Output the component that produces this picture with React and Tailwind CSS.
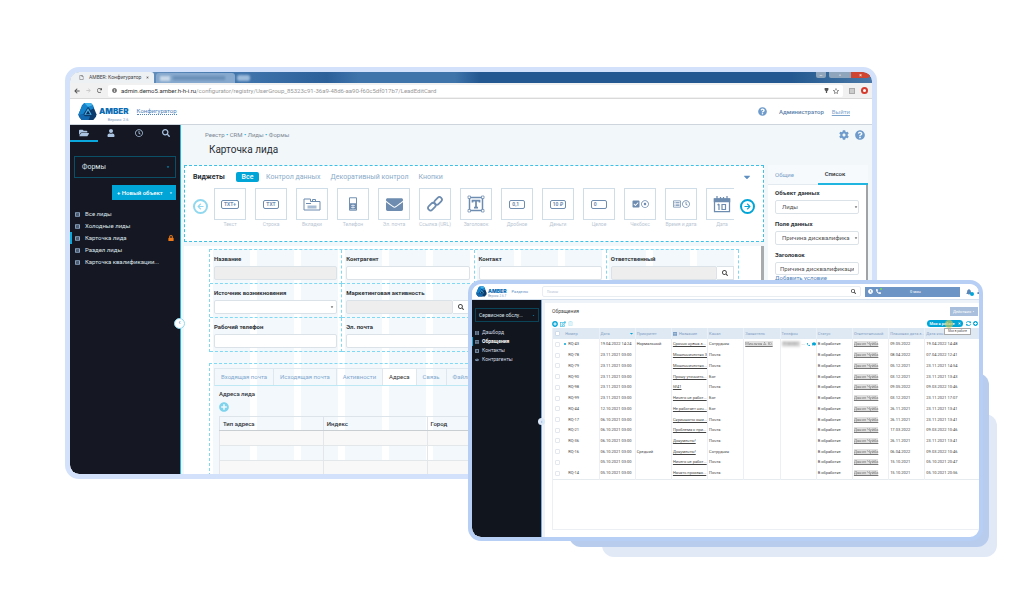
import React from "react";
import {
  FaFolderOpen, FaUser, FaRegClock, FaSearch, FaQuestionCircle, FaCog, FaLock, FaCaretDown,
  FaEnvelope, FaPlusCircle, FaRegEdit, FaRegTrashAlt, FaSyncAlt, FaBell, FaPhoneAlt,
  FaRegFile, FaRegStar, FaArrowLeft, FaRedo, FaTh, FaClock, FaCheckSquare, FaRegDotCircle,
  FaListAlt, FaRegListAlt, FaTable, FaHandshake, FaComment, FaInfoCircle, FaTimes,
} from "react-icons/fa";

function Logo({ className }) {
  return (
    <svg viewBox="0 0 36 36" className={className} aria-hidden="true">
      <path d="M12 2h12l4 4 7 17-1 5-5 6H7l-5-6-1-5L8 6z" fill="#0b3a6b" />
      <path d="M12 2h12l4 4 2 6-6 3-5-6-9 14-9 2 0-2L8 6z" fill="#1583cc" />
      <path d="M12 2h12l4 4-9 3z" fill="#3fb2ea" />
      <path d="M1 25l9-2 3 4h10l-3 7H7l-5-6z" fill="#1269b0" />
      <path d="M19 12l7 12H12z" fill="#4fb4e8" />
      <path d="M19 16l4 7h-8z" fill="#0a2f5c" />
    </svg>
  );
}

function BoxText({ children }) {
  return (
    <span className="rounded-[2px] border border-[#6d8cb0] px-[2px] py-px text-[5px] leading-[5px] font-bold text-[#6d8cb0]">
      {children}
    </span>
  );
}

function Stroke({ children, className }) {
  return (
    <svg viewBox="0 0 36 36" className={className} fill="none" stroke="#6d8cb0" strokeWidth="3" aria-hidden="true">
      {children}
    </svg>
  );
}

const widgets = [
  ["Текст", <BoxText>TXT+</BoxText>],
  ["Строка", <BoxText>TXT</BoxText>],
  ["Вкладки", <Stroke className="size-[18px]"><path d="M2 30V8h13v5h19v17zM19 13V9h6v4M6 17h10" strokeWidth="2" /><path d="M9 21h18v6H9z" fill="#a9bdd4" stroke="none" /></Stroke>],
  ["Телефон", <Stroke className="size-[14px]"><path d="M9 2h18v32H9z" strokeWidth="2.5" /><path d="M10 16h16v16H10z" fill="#6d8cb0" stroke="none" /><path d="M13 22h10M13 27h10M18 19v11" stroke="#fff" strokeWidth="1.6" /></Stroke>],
  ["Эл. почта", <FaEnvelope className="size-[17px]" />],
  ["Ссылка (URL)", <Stroke className="size-[18px]"><rect x="3" y="18" width="17" height="10" rx="5" transform="rotate(-45 12 23)" strokeWidth="3.5" /><rect x="16" y="7" width="17" height="10" rx="5" transform="rotate(-45 24 12)" strokeWidth="3.5" /></Stroke>],
  ["Заголовок", <Stroke className="size-[18px]"><path d="M5 5h26v26H5z" /><path d="M11 15v-4h14v4M18 11v14M14 25h8" strokeWidth="3.5" /><path d="M2 2h5v5H2zM29 2h5v5h-5zM2 29h5v5H2zM29 29h5v5h-5z" fill="#fff" strokeWidth="1.5" /></Stroke>],
  ["Дробное", <BoxText>0,1&nbsp;&nbsp;</BoxText>],
  ["Деньги", <BoxText>10 ₽</BoxText>],
  ["Целое", <BoxText>0&nbsp;&nbsp;&nbsp;&nbsp;&nbsp;&nbsp;</BoxText>],
  ["Чекбокс", <><FaCheckSquare className="size-[8px]" /><FaRegDotCircle className="size-[8px]" /></>],
  ["Время и дата", <><FaRegListAlt className="size-[8px]" /><FaRegClock className="size-[8px]" /></>],
  ["Дата", <Stroke className="size-[18px]"><path d="M3 8h30v25H3z" strokeWidth="2.5" /><path d="M3 8h30v5H3z" fill="#6d8cb0" /><path d="M8 2v9M15 4v6M21 4v6M28 2v9" strokeWidth="2.5" /><path d="M12 18v12M9 20l3-2M18 19h7v10h-7z" strokeWidth="2.4" /></Stroke>],
];

const sideItems = ["Все лиды", "Холодные лиды", "Карточка лида", "Раздел лиды", "Карточка квалификации..."];

function Field({ id, label, kind }) {
  return (
    <div className="flex flex-col gap-[3px] border-r border-b border-dashed border-[#7fd8f4] px-[4px] pt-[5px] pb-[3px]">
      <label htmlFor={id} className="h-[8px] text-[6px] leading-[8px] font-bold text-[#2e3338]">{label}</label>
      {kind === "select" ? (
        <div className="relative flex">
          <select id={id} className="h-[14px] w-full appearance-none rounded-[2px] border border-[#dce3e8] bg-white" />
          <FaCaretDown className="pointer-events-none absolute top-[5px] right-[3px] size-[4px] text-[#333]" />
        </div>
      ) : (
        <div className="flex">
          <input id={id} className={"h-[14px] w-full min-w-0 rounded-[2px] border border-[#dce3e8] " + (kind ? "bg-[#eeeeee]" : "bg-white")} />
          {kind === "lookup" && (
            <button aria-label="Найти" className="grid h-[14px] w-[17px] shrink-0 place-items-center border border-l-0 border-[#dce3e8] bg-white">
              <FaSearch className="size-[6px] text-[#444]" />
            </button>
          )}
        </div>
      )}
    </div>
  );
}

function PanelSelect({ id, label, value }) {
  return (
    <div className="flex flex-col gap-[3px]">
      <label htmlFor={id} className="text-[6px] leading-[8px] font-bold text-[#2e3338]">{label}</label>
      <div className="relative flex">
        <select id={id} className="h-[14px] w-full appearance-none rounded-[2px] border border-[#dce3e8] bg-white px-[6px] text-[6px] leading-[12px] text-[#555]">
          <option>{value}</option>
        </select>
        <FaCaretDown className="pointer-events-none absolute top-[5px] right-px size-[4px] text-[#333]" />
      </div>
    </div>
  );
}

function BrowserChrome() {
  return (
    <>
      <div className="flex h-[11px] items-end justify-between bg-[linear-gradient(90deg,#7fa3c9_0%,#4377ae_20%,#2b6099_32%,#3f74ab_36%,#3f74ab_48%,#235990_51%,#235990_90%,#4a79a8_100%)]">
        <div className="flex h-full items-end gap-[2px]">
          <div className="flex h-[11px] w-[84px] items-center gap-[5px] rounded-t-[3px] bg-[#eef1f4] pl-[9px]">
            <FaRegFile className="size-[5px] text-[#666]" />
            <span className="text-[5px] leading-[7px] text-[#444]">AMBER: Конфигуратор</span>
            <FaTimes className="size-[3px] text-[#666]" />
          </div>
          <div className="flex h-[10px] w-[79px] items-center gap-[3px] rounded-t-[3px] bg-[#86a9cd] px-[4px]">
            <span className="h-[5px] w-[10px] bg-[#c9d9ea] blur-[1px]" />
            <span className="h-[4px] w-[52px] bg-[#6a90b8] blur-[1px]" />
          </div>
          <div className="mb-[2px] h-[6px] w-[13px] rounded-[2px] bg-[#9dbbdb] blur-[1px]" />
        </div>
        <div className="mr-[2px] flex h-full items-start text-[5px] leading-[6px] text-white">
          <button aria-label="Свернуть" className="mr-[3px] h-[6px] w-[10px] rounded-b-[2px] bg-[#8fa5bb]">–</button>
          <button aria-label="Окно" className="h-[6px] w-[22px] rounded-bl-[2px] bg-[#8fa5bb]">▫</button>
          <button aria-label="Закрыть" className="h-[6px] w-[19px] rounded-br-[3px] bg-[#cf4532]">×</button>
        </div>
      </div>
      <div className="flex h-[16px] items-center gap-[6px] border-b border-[#d9d9d9] bg-[#f1f1f1] pr-[4px] pl-[4px]">
        <FaArrowLeft className="size-[6px] text-[#555]" />
        <FaArrowLeft className="size-[5px] rotate-180 text-[#ccc]" />
        <FaRedo className="size-[5px] text-[#555]" />
        <div className="flex h-[12px] flex-1 items-center rounded-[2px] bg-white px-[4px]">
          <FaInfoCircle className="mr-[4px] size-[5px] text-[#777]" />
          <span className="flex-1 text-[6px] leading-[8px] text-[#999]">
            <span className="text-[#333]">admin.demo5.amber.h-h-i.ru</span>/configurator/registry/UserGroup_85323c91-36a9-48d6-aa90-f60c5df017b7/LeadEditCard
          </span>
          <svg viewBox="0 0 8 8" className="mr-[4px] size-[5px]" fill="#555" aria-hidden="true"><path d="M1 0h6v3L5 5v3H3V5L1 3z" /></svg>
          <FaRegStar className="size-[6px] text-[#555]" />
        </div>
        <span className="size-[6px] border border-[#aaa] bg-[#ccc]" />
        <span className="size-[7px] rounded-full border-2 border-[#d63a2c] bg-white" />
      </div>
    </>
  );
}

function Configurator() {
  return (
    <section className="mt-[67px] mr-[147px] ml-[65px] self-start overflow-hidden rounded-[14px] border-[5px] border-[#d3e2fa] bg-white [grid-area:1/1]">
      <div className="flex h-[402px] flex-col overflow-hidden rounded-[9px]">
        <BrowserChrome />
        <header className="flex h-[26px] shrink-0 items-center border-b border-[#cfd5dc] bg-white pr-[22px] pl-[8px]">
          <Logo className="size-[19px]" />
          <div className="ml-[2px] flex flex-col pt-[7px]">
            <span className="font-[Inter,sans-serif] text-[8px] leading-[9px] font-black text-[#0b6db3]">AMBER</span>
            <span className="self-end text-[4px] leading-[8px] text-[#7d9cc0]">Версия: 2.6</span>
          </div>
          <a href="#" className="mb-[2px] ml-[8px] border-b border-dotted border-[#4b82bd] text-[6px] leading-[7px] text-[#4b82bd]">Конфигуратор</a>
          <FaQuestionCircle className="ml-auto size-[9px] text-[#6e9bcb]" />
          <span className="ml-[12px] text-[6px] leading-[8px] font-medium text-[#5c7fa9]">Администратор</span>
          <a href="#" className="ml-[8px] text-[6px] leading-[8px] text-[#7ea4cc] underline">Выйти</a>
        </header>
        <div className="flex min-h-0 flex-1">
          <aside className="relative w-[111px] shrink-0 border-r border-[#20b4e0] bg-[#151822]">
            <nav className="grid h-[17px] grid-cols-4 text-[#aac4e2]">
              {[FaFolderOpen, FaUser, FaRegClock, FaSearch].map((Icon, i) => (
                <button key={i} aria-label={["Папки", "Пользователи", "История", "Поиск"][i]} className={"grid place-items-center border-b-2 " + (i === 0 ? "border-[#0aa7dc]" : "border-transparent")}>
                  <Icon className={i === 0 ? "size-[10px]" : "size-[8px]"} />
                </button>
              ))}
            </nav>
            <div className="flex flex-col px-[4px] pt-[14px]">
              <button className="flex h-[22px] items-center justify-between border border-[#0b4f66] pr-[5px] pl-[7px] text-[7px] leading-[9px] text-[#dfe5ec]">
                Формы<FaCaretDown className="size-[4px] text-[#0aa7dc]" />
              </button>
              <button className="mt-[7px] flex h-[15px] w-[64px] items-center justify-between self-end bg-[#00a5d8] pr-[3px] pl-[5px] text-[6px] leading-[8px] font-medium text-white">
                + Новый объект<FaCaretDown className="size-[4px]" />
              </button>
            </div>
            <ul className="mt-[8px]">
              {sideItems.map((t, i) => (
                <li key={t} className={"flex h-[12px] items-center border-l-2 pr-[6px] pl-[3px] text-[6px] leading-[8px] text-[#dfe5ec] " + (i === 2 ? "border-[#0aa7dc]" : "border-transparent")}>
                  <FaListAlt className="mr-[5px] size-[5px] text-[#8aa6c4]" />
                  <a href="#">{t}</a>
                  {i === 2 && <FaLock className="ml-auto size-[6px] text-[#f07a1a]" />}
                </li>
              ))}
            </ul>
            <button aria-label="Свернуть меню" className="absolute top-[193px] right-[-5px] grid size-[11px] place-items-center rounded-full border border-[#8fd8ef] bg-white text-[7px] leading-[7px] text-[#3b7fc0]">‹</button>
          </aside>
          <main className="flex min-w-0 flex-1 flex-col bg-[#f2f7fa]">
            <div className="flex h-[40px] shrink-0 justify-between pr-[7px] pl-[24px]">
              <div>
                <p className="pt-[6px] text-[6px] leading-[8px] text-[#7c8894]">Реестр <b className="text-[#2cb5e0]">•</b> CRM <b className="text-[#2cb5e0]">•</b> Лиды <b className="text-[#2cb5e0]">•</b> Формы</p>
                <h1 className="pt-[5px] pl-[4px] text-[10px] leading-[12px] text-[#2a2f35]">Карточка лида</h1>
              </div>
              <div className="flex gap-[6px] pt-[5px] text-[#6e9bcb]">
                <FaCog className="size-[10px]" />
                <FaQuestionCircle className="size-[10px]" />
              </div>
            </div>
            <div className="flex min-h-0 flex-1 gap-[4px] pr-[4px] pl-[3px]">
              <div className="flex min-w-0 flex-1 flex-col gap-[4px]">
                <section className="flex h-[77px] shrink-0 flex-col border border-dashed border-[#3cc0e6] bg-white">
                  <div className="flex h-[22px] items-center pr-[11px] pl-[8px] text-[7px] leading-[9px] text-[#8aabc9]">
                    <h2 className="w-[43px] font-bold text-[#2a2f35]">Виджеты</h2>
                    <button className="h-[10px] w-[23px] rounded-[2px] bg-[#00a5d8] font-medium text-white">Все</button>
                    <button className="ml-[7px]">Контрол данных</button>
                    <button className="ml-[10px]">Декоративный контрол</button>
                    <button className="ml-[10px]">Кнопки</button>
                    <FaCaretDown className="ml-auto size-[10px] text-[#5f8fc2]" />
                  </div>
                  <div className="flex px-[8px]">
                    <button aria-label="Назад" className="mt-[11px] mr-[6px] grid size-[15px] shrink-0 place-items-center rounded-full border-2 border-[#8fd8ef] text-[#8fd8ef]"><FaArrowLeft className="size-[7px]" /></button>
                    <div className="flex min-w-0 flex-1 gap-[9px] overflow-hidden">
                      {widgets.map(([name, icon]) => (
                        <figure key={name} className="flex w-[32px] shrink-0 flex-col items-center">
                          <div className="flex h-[32px] w-full items-center justify-center gap-px border border-[#cfdde9] bg-white text-[#6d8cb0]">{icon}</div>
                          <figcaption className="pt-px text-[5px] leading-[7px] whitespace-nowrap text-[#b9c6d3]">{name}</figcaption>
                        </figure>
                      ))}
                    </div>
                    <button aria-label="Вперёд" className="mt-[11px] ml-[6px] grid size-[15px] shrink-0 place-items-center rounded-full border-2 border-[#00a5d8] text-[#00a5d8]"><FaArrowLeft className="size-[7px] rotate-180" /></button>
                  </div>
                </section>
                <section className="min-h-0 flex-1 overflow-hidden border-r-[3px] border-[#a8abae] bg-white pt-[3px] pr-[22px] pl-[25px]">
                  <div className="bg-[repeating-linear-gradient(90deg,#fff_0_4px,#f2f8fc_4px_41px,#fff_41px_44px)]">
                    <div className="grid grid-cols-4 border-t border-l border-dashed border-[#7fd8f4]">
                      <Field id="f1" label="Название" kind="off" />
                      <Field id="f2" label="Контрагент" />
                      <Field id="f3" label="Контакт" />
                      <Field id="f4" label="Ответственный" kind="lookup" />
                      <Field id="f5" label="Источник возникновения" kind="select" />
                      <Field id="f6" label="Маркетинговая активность" kind="lookup" />
                      <div className="col-span-2" />
                      <Field id="f7" label="Рабочий телефон" />
                      <Field id="f8" label="Эл. почта" />
                    </div>
                    <div className="mt-[11px] border-t border-l border-dashed border-[#7fd8f4] pt-[4px] pl-[4px]">
                      <div className="flex h-[18px] border border-r-0 border-[#dfe8ee] border-b-[#bfe8f5] text-[6px] leading-[8px] text-[#84a9cf]">
                        {["Входящая почта", "Исходящая почта", "Активности", "Адреса", "Связь", "Файлы"].map((t) => (
                          <button key={t} className={"border-r border-[#dfe8ee] px-[6px] " + (t === "Адреса" ? "bg-white text-[#333]" : "")}>{t}</button>
                        ))}
                      </div>
                      <div className="pt-[4px] pl-[5px]">
                        <h3 className="text-[6px] leading-[8px] font-medium text-[#2e3338]">Адреса лида</h3>
                        <button aria-label="Добавить адрес" className="mt-[4px] block"><FaPlusCircle className="size-[10px] text-[#7fd3ec]" /></button>
                        <table className="mt-[4px] w-full table-fixed border-collapse text-left text-[6px] leading-[8px]">
                          <thead>
                            <tr className="h-[14px]">
                              {["Тип адреса", "Индекс", "Город", "Улица", "Дом"].map((t) => <th key={t} className="border border-[#dde4ea] border-b-[#c9ced3] px-[3px] font-medium text-[#2e3338]">{t}</th>)}
                            </tr>
                          </thead>
                          <tbody>
                            {[0, 1, 2].map((r) => (
                              <tr key={r} className={"h-[15px] " + (r % 2 ? "" : "bg-[#f8f8f8]")}>
                                {[0, 1, 2, 3, 4].map((c) => <td key={c} className="border border-[#e3e7ea]" />)}
                              </tr>
                            ))}
                          </tbody>
                        </table>
                      </div>
                    </div>
                  </div>
                </section>
              </div>
              <aside className="w-[100px] shrink-0 bg-white">
                <div className="grid h-[20px] grid-cols-2 bg-[#f7fafc] text-[6px] leading-[8px]">
                  <button className="border-b border-[#e3eaf0] pl-[7px] text-left text-[#7ba0c8]">Общие</button>
                  <button className="border-b-2 border-[#20b4e0] pr-[16px] font-medium text-[#2a2f35]">Список</button>
                </div>
                <div className="flex h-[290px] flex-col gap-[6px] border-r-2 border-[#a0a3a6] pt-[4px] pr-[7px] pl-[7px]">
                  <PanelSelect id="p1" label="Объект данных" value="Лиды" />
                  <PanelSelect id="p2" label="Поле данных" value="Причина дисквалифика" />
                  <div className="flex flex-col gap-[3px]">
                    <label htmlFor="p3" className="text-[6px] leading-[8px] font-bold text-[#2e3338]">Заголовок</label>
                    <input id="p3" defaultValue="Причина дисквалификации" className="h-[13px] rounded-[2px] border border-[#dce3e8] px-[4px] text-[6px] text-[#555]" />
                    <a href="#" className="mt-[-4px] text-[6px] leading-[8px] text-[#4b82bd] underline">Добавить условие</a>
                  </div>
                </div>
              </aside>
            </div>
          </main>
        </div>
      </div>
    </section>
  );
}

const requests = [
  ["RQ-43", "19.04.2022 14:24", "Нормальный", "Срочно нужна з...", "Сотрудник", "09.05.2022", "19.04.2022 14:48"],
  ["RQ-78", "23.11.2021 03:00", "", "Мошенничество 3", "Почта", "08.04.2022", "07.04.2022 12:41"],
  ["RQ-79", "23.11.2021 03:00", "", "Мошенничество...", "Почта", "05.12.2021", "23.11.2021 14:54"],
  ["RQ-90", "23.11.2021 03:00", "", "Прошу уточнить...", "Бот", "03.12.2021", "23.11.2021 13:43"],
  ["RQ-98", "23.11.2021 03:00", "", "№41", "Почта", "09.05.2022", "09.03.2022 10:46"],
  ["RQ-99", "23.11.2021 03:00", "", "Ничего не работ...", "Бот", "03.12.2021", "23.11.2021 17:07"],
  ["RQ-44", "12.10.2021 03:00", "", "Не работает нич...", "Бот", "26.11.2021", "23.11.2021 13:41"],
  ["RQ-17", "06.10.2021 03:00", "", "Скриншоты оши...", "Почта", "26.11.2021", "23.11.2021 13:41"],
  ["RQ-21", "06.10.2021 03:00", "", "Проблема с при...", "Почта", "17.03.2022", "09.03.2022 10:46"],
  ["RQ-36", "06.10.2021 03:00", "", "Документы!", "Почта", "26.11.2021", "23.11.2021 13:41"],
  ["RQ-16", "06.10.2021 03:00", "Средний", "Документы!", "Сотрудник", "06.04.2022", "09.03.2022 10:46"],
  ["", "05.10.2021 03:00", "", "Ничего не работ...", "Почта", "15.10.2021", "05.10.2021 20:47"],
  ["RQ-14", "05.10.2021 03:00", "", "Начать произво...", "Почта", "15.10.2021", "05.10.2021 20:56"],
];

const columns = ["Дата", "Приоритет", "Название", "Канал", "Заявитель", "Телефон", "Статус", "Ответственный", "Плановая дата з..."];
const cell = "overflow-hidden border-l border-[#eceff3] pl-px whitespace-nowrap";

function RequestsTable() {
  return (
    <table className="h-[152px] w-full table-fixed border-collapse border-b border-[#e6ebf0] text-left text-[4px] leading-[6px] text-[#444]">
      <thead>
        <tr className="h-[11px] bg-[#dfe9f4] text-[#7f9ec2]">
          <th className="w-[2.4%]"><input type="checkbox" aria-label="Выбрать все" className="ml-[2px] block size-[5px] appearance-none rounded-[1px] border border-[#cfdbe8] bg-white" /></th>
          <th className="w-[8.4%] pl-[2px] font-normal">Номер</th>
          {columns.map((c) => (
            <th key={c} className="w-[8.5%] overflow-hidden border-l border-[#e9f0f7] pl-px font-normal whitespace-nowrap">
              <span className="flex items-center gap-[2px]">
                {c === "Название" && <FaTable className="size-[4px] shrink-0 text-[#5b86b8]" />}
                {c}
                {c === "Дата" && <FaCaretDown className="mr-px ml-auto size-[5px] text-[#00a5d8]" />}
              </span>
            </th>
          ))}
          <th className="overflow-hidden border-l border-[#e9f0f7] pl-px font-normal whitespace-nowrap">Дата кон...</th>
        </tr>
      </thead>
      <tbody>
        {requests.map(([num, date, prio, name, chan, plan, changed], i) => (
          <tr key={i}>
            <td><input type="checkbox" aria-label={"Выбрать " + num} className="ml-[2px] block size-[5px] appearance-none rounded-[1px] border border-[#e3e8ee] bg-white" /></td>
            <td className="pl-px"><span className="flex items-center gap-[2px]"><i className={"size-[2px] rounded-full " + (i === 0 ? "bg-[#00a5d8]" : "")} />{num}</span></td>
            <td className={cell}>{date}</td>
            <td className={cell}>{prio}</td>
            <td className={cell}><a href="#" className="underline">{name}</a></td>
            <td className={cell}>{chan}</td>
            <td className={cell}>{i === 0 && <span className="inline-block bg-[#e2e2e2] text-[#777] underline blur-[0.6px]">Минаков А. Ю.</span>}</td>
            <td className={cell}>{i === 0 && <span className="flex items-center gap-[2px]"><span className="w-[18px] overflow-hidden bg-[#dddddd] text-[#888] blur-[1px]">79180001</span><span>...</span><FaPhoneAlt className="size-[3px] text-[#00a5d8]" /><FaComment className="size-[4px] text-[#00a5d8]" /></span>}</td>
            <td className={cell}>В обработке</td>
            <td className={cell}><span className="inline-block bg-[#dedede] text-[#777] underline blur-[0.6px]">Данил Чуйба</span></td>
            <td className={cell}>{plan}</td>
            <td className={cell}>{changed}</td>
          </tr>
        ))}
      </tbody>
    </table>
  );
}

function ServiceDesk() {
  const items = [["Дашборд", FaTh], ["Обращения", FaTable], ["Контакты", FaListAlt], ["Контрагенты", FaHandshake]];
  return (
    <section className="z-10 mt-[280px] mr-[41px] ml-[468px] self-start overflow-hidden rounded-[13px] border-4 border-[#b7cef5] bg-white [grid-area:1/1]">
      <div className="overflow-hidden rounded-[9px]">
        <header className="flex h-[16px] items-center border-b border-[#d5e0ee] bg-white pl-[4px]">
          <Logo className="size-[11px] shrink-0" />
          <div className="ml-px flex flex-col pt-[3px]">
            <span className="font-[Inter,sans-serif] text-[5px] leading-[6px] font-black text-[#0b6db3]">AMBER</span>
            <span className="text-[3px] leading-[4px] text-[#7d9cc0]">Версия: 2.6.7</span>
          </div>
          <a href="#" className="ml-[5px] w-[26px] text-[4px] leading-[6px] text-[#5f8fc2]">Разделы</a>
          <div className="ml-[4px] flex h-[11px] min-w-0 flex-1 items-center rounded-[2px] border border-[#e8edf2] px-[4px]">
            <input aria-label="Поиск" placeholder="Поиск" className="min-w-0 flex-1 text-[4px] leading-[6px] placeholder:text-[#b9c6d3]" />
            <FaSearch className="size-[5px] text-[#444]" />
          </div>
          <div className="ml-[4px] flex h-[10px] w-[95px] shrink-0 items-center gap-[3px] bg-[#6c94c4] pl-[3px] text-[4px] leading-[6px] text-white">
            <FaClock className="size-[5px]" />
            <span className="relative flex"><FaPhoneAlt className="size-[5px]" /><i className="absolute top-[-1px] right-[-1px] size-[2px] rounded-full bg-[#6fe04a]" /></span>
            <span className="ml-[26px]">0 мин</span>
          </div>
          <div className="relative ml-[6px] flex h-[10px] w-[13px] shrink-0 items-center justify-between overflow-hidden text-[#5b86b8]">
            <FaBell className="size-[6px]" />
            <i className="absolute top-[5px] left-[4px] size-[4px] rounded-full bg-[#00a5d8]" />
            <FaUser className="mr-[-3px] size-[5px] shrink-0" />
          </div>
        </header>
        <div className="flex">
          <aside className="relative w-[70px] shrink-0 border-r border-[#7aa7d8] bg-[#11151e] pt-[8px]">
            <button className="mx-[3px] flex h-[14px] w-[64px] items-center justify-between border border-[#0b4358] px-[3px] text-[5px] leading-[7px] text-[#dfe5ec]">
              Сервисное обслу...<FaCaretDown className="size-[3px] text-[#0aa7dc]" />
            </button>
            <ul className="mt-[6px]">
              {items.map(([t, Icon], i) => (
                <li key={t} className={"flex h-[9px] items-center border-l pl-[2px] text-[5px] leading-[7px] text-[#cfd7e0] " + (i === 1 ? "border-[#0aa7dc] font-bold text-white" : "border-transparent")}>
                  <Icon className="mr-[3px] size-[4px] text-[#8aa6c4]" /><a href="#">{t}</a>
                </li>
              ))}
            </ul>
            <button aria-label="Свернуть меню" className="absolute top-[118px] right-[-4px] grid size-[7px] place-items-center rounded-full bg-[#dbe8f8] text-[5px] leading-[5px] text-[#3b7fc0]">‹</button>
          </aside>
          <main className="min-w-0 flex-1 border-t-[3px] border-l-[3px] border-[#eef3f9] pt-[4px] pb-[7px] pl-[7px]">
            <div className="flex h-[9px] items-center justify-between pr-px">
              <h1 className="text-[5px] leading-[7px] text-[#444]">Обращения</h1>
              <button className="flex h-[9px] w-[28px] items-center justify-center gap-px bg-[#a9bfdc] text-[4px] leading-[6px] text-white">Действия<FaCaretDown className="size-[3px]" /></button>
            </div>
            <div className="mt-[3px] flex h-[9px] items-center gap-[2px] pr-px text-[#00a5d8]">
              <button aria-label="Добавить"><FaPlusCircle className="size-[6px]" /></button>
              <button aria-label="Изменить"><FaRegEdit className="size-[6px]" /></button>
              <button aria-label="Удалить"><FaRegTrashAlt className="size-[5px] text-[#a5dff1]" /></button>
              <div className="relative ml-auto">
                <button className="relative flex h-[7px] w-[36px] items-center justify-center gap-[3px] rounded-full bg-[#00a5d8] text-[4px] leading-[6px] font-medium text-white">
                  <i className="absolute top-0 left-[18px] size-[8px] rounded-full bg-[#d8c94a]/60" />
                  <span>Мои в работе</span><FaTimes className="size-[3px]" />
                </button>
                <span role="tooltip" className="absolute top-[8px] left-[17px] border border-[#aaa] bg-white px-[3px] text-[3px] leading-[5px] whitespace-nowrap text-[#555]">Мои в работе</span>
              </div>
              <button aria-label="Обновить" className="ml-px"><FaSyncAlt className="size-[5px]" /></button>
              <button aria-label="Добавить колонку"><FaPlusCircle className="size-[5px]" /></button>
            </div>
            <div className="min-h-[202px] border-b border-l border-[#eceff3]">
              <RequestsTable />
            </div>
          </main>
        </div>
      </div>
    </section>
  );
}

export default function App() {
  return (
    <div className="grid min-h-screen overflow-hidden bg-white font-[Roboto,sans-serif]">
      <Configurator />
      <div className="mt-[414px] mr-[27px] ml-[602px] h-[143px] self-start rounded-[12px] bg-[#e1e9f7] [grid-area:1/1]" />
      <div className="mt-[373px] mr-[35px] ml-[569px] h-[174px] self-start rounded-[12px] bg-[#b8ccee] [grid-area:1/1]" />
      <ServiceDesk />
    </div>
  );
}
